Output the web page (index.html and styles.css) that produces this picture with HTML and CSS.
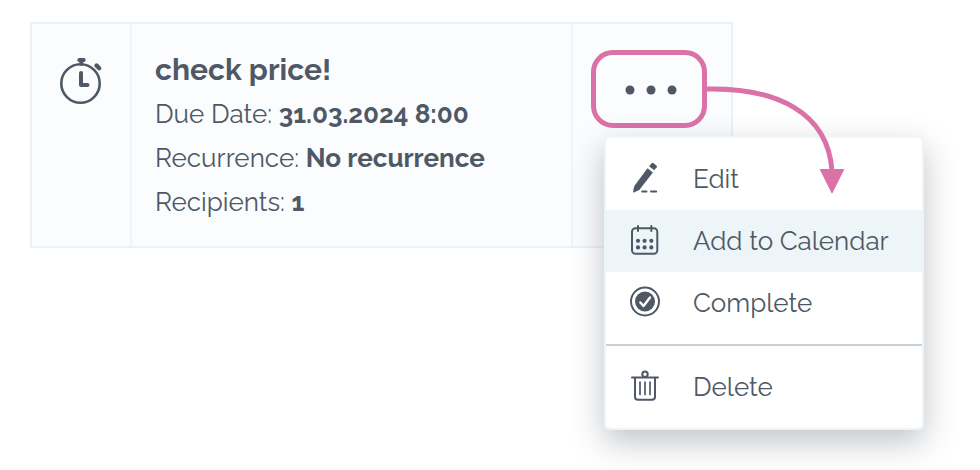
FILE: index.html
```html
<!DOCTYPE html>
<html lang="en">
<head>
  <meta charset="utf-8">
  <meta name="viewport" content="width=device-width, initial-scale=1">
  <title>Reminder</title>
  <link rel="stylesheet" href="styles.css">
</head>
<body>
  <main class="page">
    <article class="reminder">
      <div class="reminder-type">
        <svg class="timer-icon" width="44" height="48" viewBox="0 0 44 48" aria-hidden="true">
          <circle cx="21.500" cy="26.500" r="19.200" fill="none" stroke="currentColor" stroke-width="2.600"/>
          <path d="M20.300 3h4.400M22.300 3v4" fill="none" stroke="currentColor" stroke-width="4" stroke-linecap="round"/>
          <path d="M37.500 8.500l2.700 2.700" fill="none" stroke="currentColor" stroke-width="4.400" stroke-linecap="round"/>
          <path d="M22 16v12h6.500" fill="none" stroke="currentColor" stroke-width="4" stroke-linecap="round" stroke-linejoin="round"/>
        </svg>
      </div>
      <div class="reminder-details">
        <h1 class="reminder-title">check price!</h1>
        <p class="reminder-line">Due Date: <strong>31.03.2024 8:00</strong></p>
        <p class="reminder-line">Recurrence: <strong>No recurrence</strong></p>
        <p class="reminder-line">Recipients: <strong>1</strong></p>
      </div>
      <div class="reminder-actions">
        <button class="more-button" type="button" aria-label="More actions" aria-expanded="true">
          <svg width="52" height="10" viewBox="0 0 52 10" fill="currentColor" aria-hidden="true">
            <circle cx="5" cy="5" r="4.500"/><circle cx="26" cy="5" r="4.500"/><circle cx="47" cy="5" r="4.500"/>
          </svg>
        </button>
        <div class="menu" role="menu">
          <button class="menu-item" type="button" role="menuitem">
            <svg class="menu-icon" viewBox="0 0 30 32" fill="currentColor" aria-hidden="true">
              <path d="M17.500 5.300l5.400 4.100L9.300 26.900 3.200 29.700Q3 26 4.500 22.700z"/>
              <path d="M19.100 3.300l2.500-3q.8-.8 1.700-.2l3.100 2.400q.9.800.3 1.700L24.200 7.300z"/>
              <path d="M12.200 28.600h4.300M21 28.600h5.200" stroke="currentColor" stroke-width="2" stroke-linecap="round"/>
            </svg>
            <span>Edit</span>
          </button>
          <button class="menu-item menu-item-active" type="button" role="menuitem">
            <svg class="menu-icon" viewBox="0 0 30 32" fill="currentColor" aria-hidden="true">
              <rect x="2" y="3.200" width="25.300" height="25.500" rx="3.500" fill="none" stroke="currentColor" stroke-width="2"/>
              <path d="M8 1v5M21.300 1v5" stroke="currentColor" stroke-width="2" stroke-linecap="round"/>
              <circle cx="8" cy="15.800" r="2.100"/><circle cx="14.600" cy="15.800" r="2.100"/><circle cx="21.300" cy="15.800" r="2.100"/>
              <circle cx="8" cy="22.400" r="2.100"/><circle cx="14.600" cy="22.400" r="2.100"/><circle cx="21.300" cy="22.400" r="2.100"/>
            </svg>
            <span>Add to Calendar</span>
          </button>
          <button class="menu-item" type="button" role="menuitem">
            <svg class="menu-icon" viewBox="0 0 30 32" aria-hidden="true">
              <circle cx="15" cy="14.500" r="14" fill="none" stroke="currentColor" stroke-width="2"/>
              <circle cx="15" cy="14.500" r="10" fill="currentColor"/>
              <path d="M10.300 15.500l3.200 3.500 6.500-8.500" fill="none" stroke="#fff" stroke-width="2.400" stroke-linecap="round" stroke-linejoin="round"/>
            </svg>
            <span>Complete</span>
          </button>
          <hr class="menu-divider">
          <button class="menu-item" type="button" role="menuitem">
            <svg class="menu-icon" viewBox="0 0 30 32" fill="none" stroke="currentColor" stroke-width="2" stroke-linecap="round" aria-hidden="true">
              <circle cx="15" cy="3.200" r="2.700"/>
              <path d="M2 6.400h26M5 6.600v19.200q0 3 3 3h14q3 0 3-3V6.600"/>
              <path d="M10 11v12.500M15 11v12.500M20 11v12.500" stroke-width="1.700"/>
            </svg>
            <span>Delete</span>
          </button>
        </div>
        <svg class="pointer" width="142" height="110" viewBox="0 0 142 110" aria-hidden="true">
          <path d="M0 5C72 3 124 28 128 87" fill="none" stroke="currentColor" stroke-width="5"/>
          <path d="M115.500 85h25L128 110z" fill="currentColor"/>
        </svg>
      </div>
    </article>
  </main>
</body>
</html>
```
FILE: styles.css
```css
* {
  box-sizing: border-box;
}

body {
  margin: 0;
  background: #fff;
  color: #4f5966;
  font-family: Raleway, Lato, sans-serif;
  font-size: 26px;
  font-weight: 400;
}

.page {
  min-height: 100vh;
  padding: 22px 30px;
}

.reminder {
  display: grid;
  grid-template-columns: 98px 1fr 158px;
  max-width: 703px;
  border: 2px solid #eaf2f7;
  background: #fbfcfe;
}

.reminder-type {
  padding: 33px 27px;
}

.timer-icon {
  display: block;
}

.reminder-details {
  padding: 24px 23px 22px;
  border: solid #edf5f9;
  border-width: 0 2px;
}

.reminder-title,
.reminder-line {
  margin: 0;
  line-height: 44px;
}

.reminder-title {
  font-size: 30px;
  font-weight: 700;
}

.reminder-line strong {
  font-weight: 700;
}

.reminder-actions {
  position: relative;
  padding: 26px 18px;
}

.more-button {
  display: flex;
  align-items: center;
  justify-content: center;
  width: 116px;
  height: 78px;
  padding: 2px 0 0 4px;
  border: 5px solid #db72a7;
  border-radius: 22px;
  background: transparent;
  color: inherit;
}

.menu {
  position: absolute;
  top: 112px;
  left: 31px;
  width: 320px;
  padding: 10px 0;
  border: 2px solid #edf5f9;
  border-radius: 6px;
  background: #fff;
  box-shadow: 0 12px 32px rgba(60, 68, 82, 0.32);
}

.menu-item {
  display: flex;
  align-items: center;
  gap: 33px;
  width: 100%;
  height: 62px;
  padding: 0 24px;
  border: 0;
  background: transparent;
  color: inherit;
  font: inherit;
  text-align: left;
}

.menu-item-active {
  background: #edf5f9;
}

.menu-icon {
  flex: none;
  width: 30px;
  height: 32px;
  overflow: visible;
}

.menu-divider {
  height: 2px;
  margin: 10px 0;
  border: 0;
  background: #c8d0d7;
}

.pointer {
  position: absolute;
  top: 60px;
  left: 131px;
  color: #db72a7;
  pointer-events: none;
}
```
